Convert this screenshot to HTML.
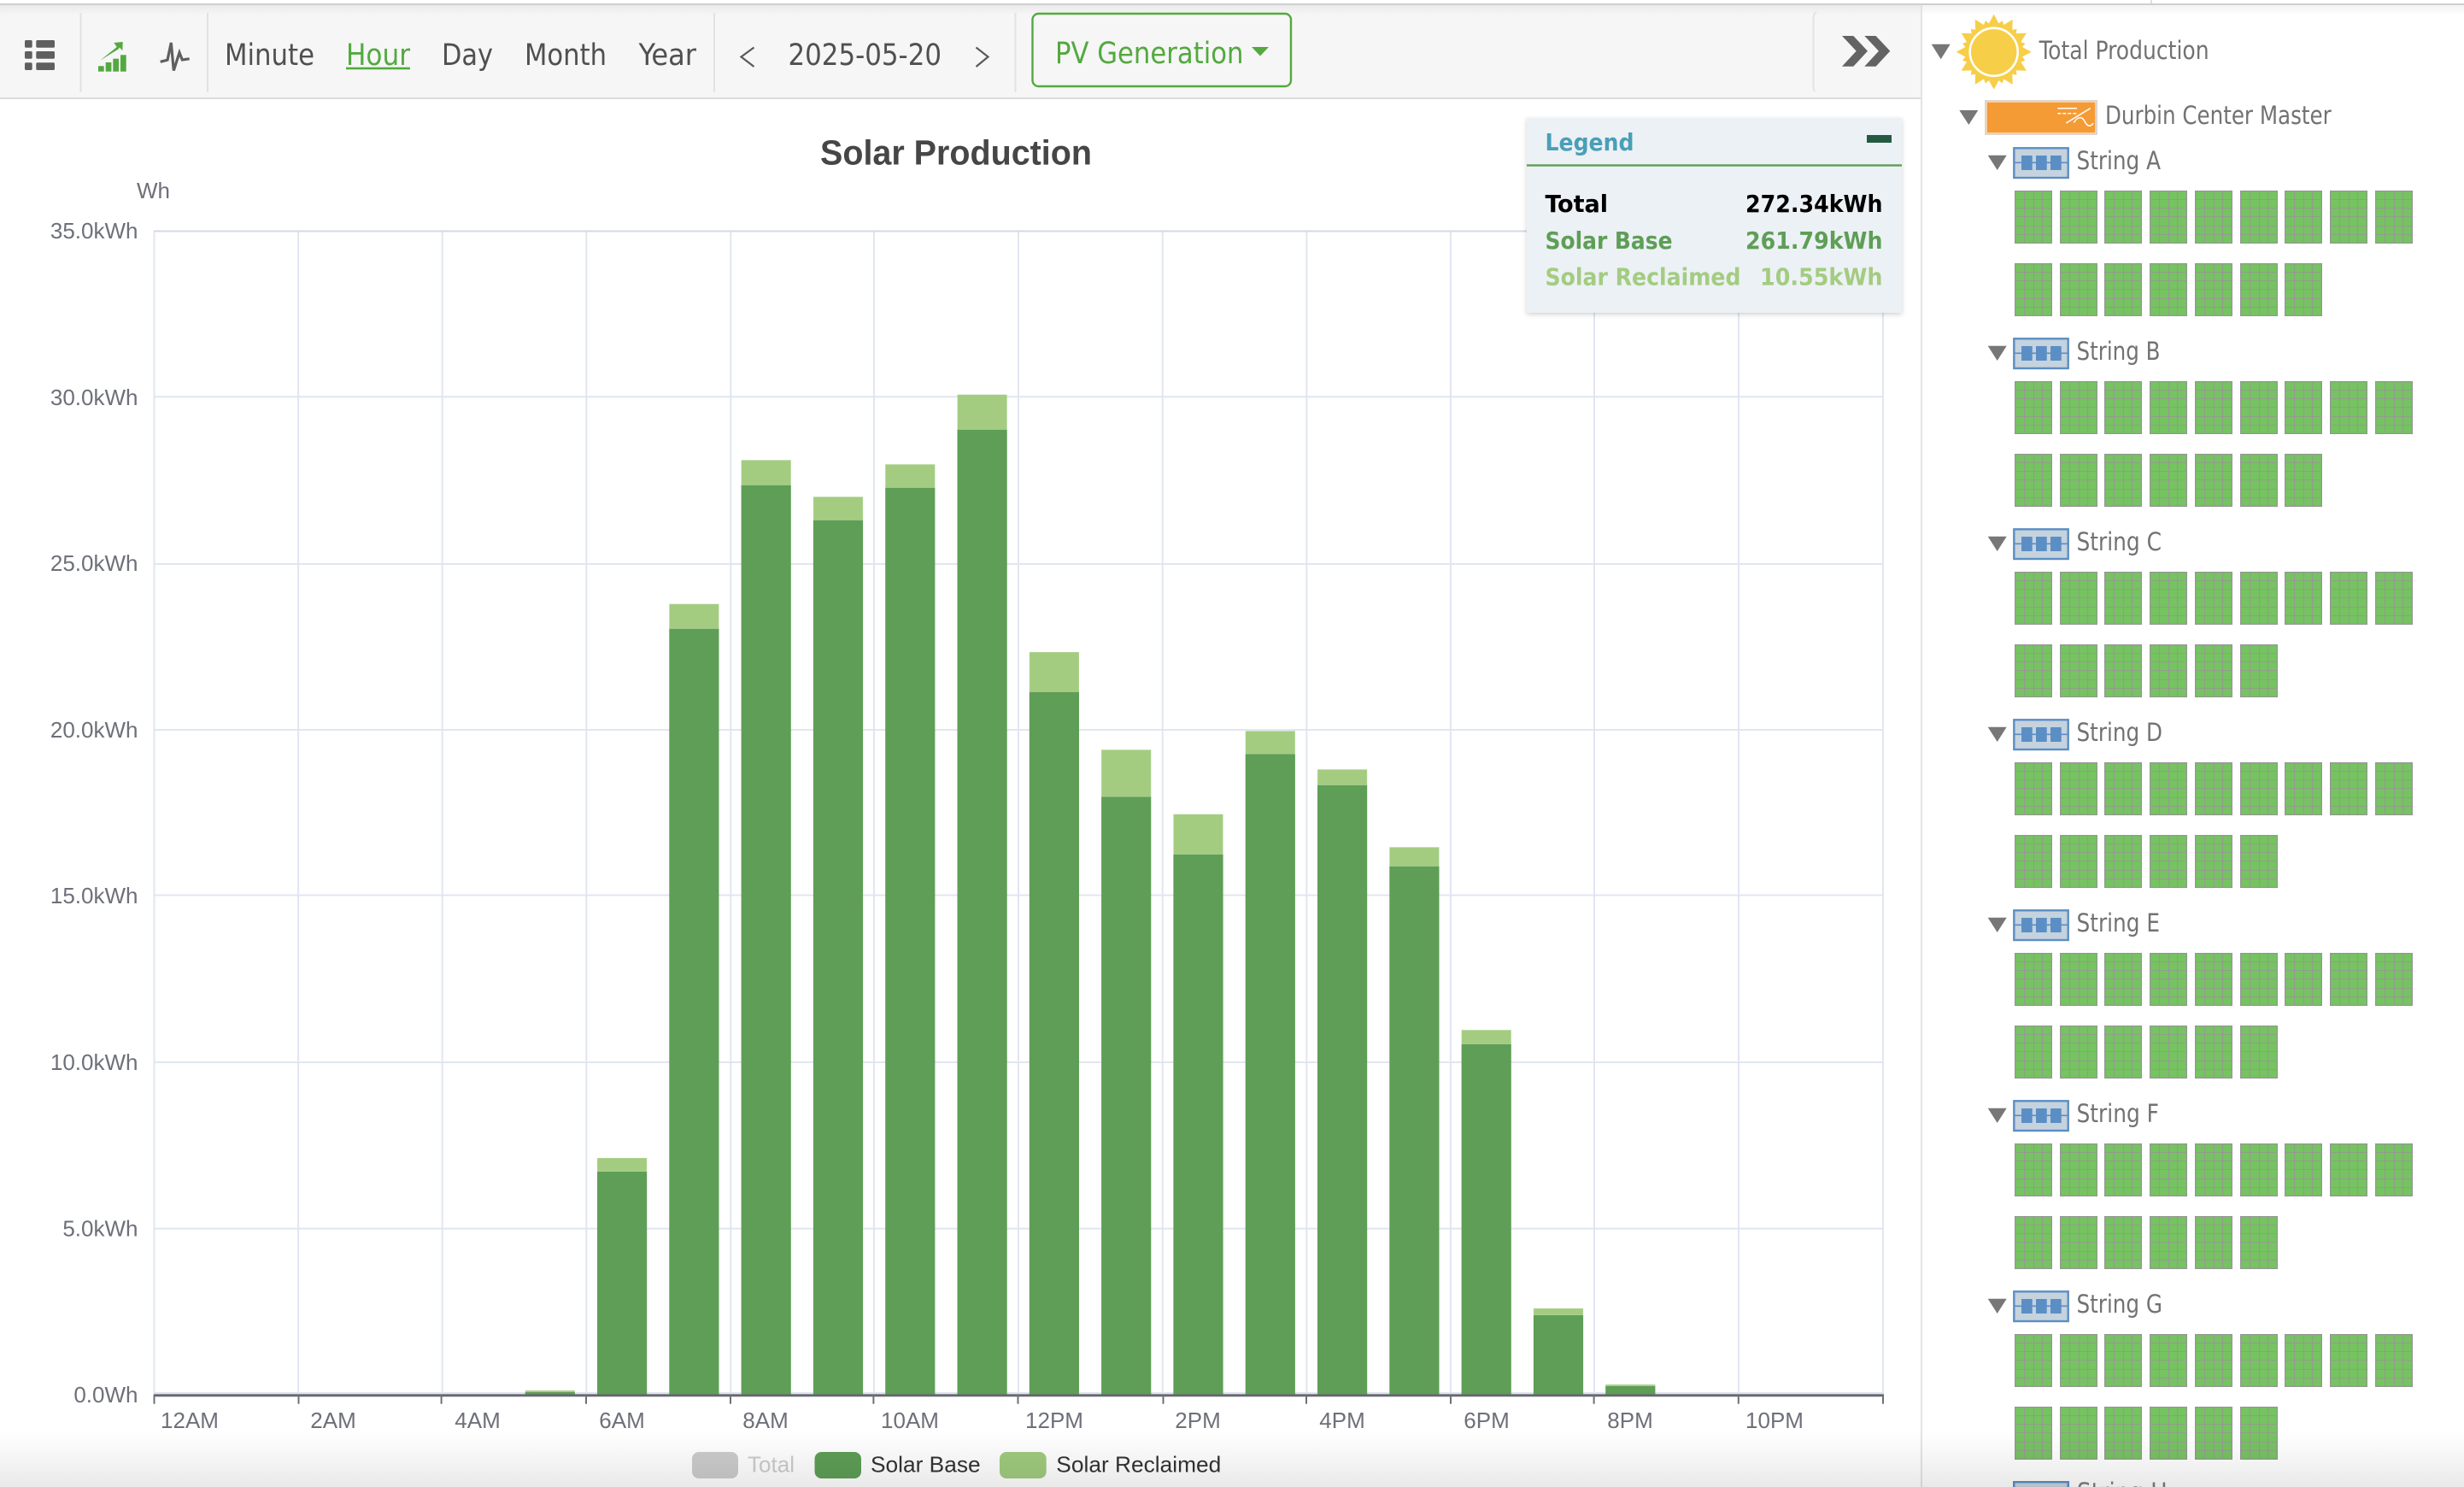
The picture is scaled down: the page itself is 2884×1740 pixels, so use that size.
<!DOCTYPE html>
<html lang="en"><head><meta charset="utf-8"><title>Solar Production</title>
<style>
html,body{margin:0;padding:0;background:#fff;width:2884px;height:1740px;overflow:hidden}
svg{display:block}
.tb{font:35px "DejaVu Sans",sans-serif;font-stretch:condensed;fill:#505050}
.tr{font:29px "DejaVu Sans",sans-serif;font-stretch:condensed;fill:#727272}
.ax{font:26px "Liberation Sans",sans-serif;fill:#6e7079}
.lg{font:bold 28px "DejaVu Sans",sans-serif;font-stretch:condensed}
#sh8{position:absolute;left:2431px;top:1733px;width:120px;height:7px;overflow:hidden}
#sh8 div{position:absolute;left:0;top:-7px;font:29px/40px "DejaVu Sans",sans-serif;font-stretch:condensed;color:#727272;white-space:nowrap}
</style></head><body>
<svg xmlns="http://www.w3.org/2000/svg" width="2884" height="1740" viewBox="0 0 2884 1740">
<defs>
<linearGradient id="fb" x1="0" y1="0" x2="0" y2="1"><stop offset="0" stop-color="#000" stop-opacity="0"/><stop offset="1" stop-color="#000" stop-opacity=".085"/></linearGradient>
<linearGradient id="ft" x1="0" y1="0" x2="0" y2="1"><stop offset="0" stop-color="#000" stop-opacity=".05"/><stop offset="1" stop-color="#000" stop-opacity="0"/></linearGradient>
<filter id="sh" x="-5%" y="-5%" width="110%" height="112%"><feDropShadow dx="0" dy="2" stdDeviation="3" flood-color="#000" flood-opacity=".18"/></filter>
<g id="p"><rect x=".6" y=".6" width="42.8" height="60.8" fill="#76c361" stroke="#959595" stroke-width="1.2"/><path d="M11.5 1V61M22.5 1V61M32.5 1V61M1 10.5H43M1 20.5H43M1 30.5H43M1 41.5H43M1 51.5H43" stroke="#939c8e" stroke-width="1.1" fill="none"/></g>
<g id="row6"><use href="#p" x="2358"/><use href="#p" x="2411"/><use href="#p" x="2463"/><use href="#p" x="2516"/><use href="#p" x="2569"/><use href="#p" x="2622"/></g>
<g id="str">
<path d="M2326.7 181.7H2348.7L2337.7 199Z" fill="#777"/>
<rect x="2357.3" y="173.3" width="63.4" height="34.7" fill="#c5d3de" stroke="#5b8ec4" stroke-width="2.4"/>
<path d="M2358 190.3H2420" stroke="#5b8ec4" stroke-width="1.6"/>
<rect x="2366" y="182" width="12.7" height="17" fill="#5b8ec4"/><rect x="2383" y="182" width="12.7" height="17" fill="#5b8ec4"/><rect x="2400" y="182" width="12.7" height="17" fill="#5b8ec4"/>
<use href="#row6" y="223"/><use href="#p" x="2674" y="223"/><use href="#p" x="2727" y="223"/><use href="#p" x="2780" y="223"/>
<use href="#row6" y="308"/>
</g>
<path id="rl" d="M-7.5 -30L0 -44L7.5 -30Z"/>
<path id="rs" d="M-5 -31L0 -38L5 -31Z"/>
</defs>

<rect width="2884" height="1740" fill="#fff"/>

<!-- toolbar -->
<rect x="0" y="6" width="2249" height="108" fill="#f6f6f6"/>
<rect x="0" y="114" width="2249" height="2" fill="#dcdcdc"/>
<rect x="0" y="4" width="2884" height="2" fill="#cfcfcf"/>
<rect x="2517" y="0" width="2" height="4" fill="#e0e0e0"/>
<rect x="0" y="6" width="2884" height="12" fill="url(#ft)"/>
<g fill="#e2e2e2"><rect x="93.5" y="15" width="2" height="93"/><rect x="242" y="15" width="2" height="93"/><rect x="835" y="15" width="2" height="93"/><rect x="1187.5" y="15" width="2" height="93"/></g>
<path d="M2126 14Q2122.5 16 2122.5 22V100Q2122.5 105 2124 107" fill="none" stroke="#e4e4e4" stroke-width="2"/>
<rect x="2248" y="6" width="2" height="1734" fill="#e3e3e3"/>

<!-- toolbar icons -->
<g fill="#5f5f5f">
<rect x="29" y="47" width="8.7" height="8.7" rx="1.5"/><rect x="42.3" y="47" width="21.7" height="8.7" rx="1.5"/>
<rect x="29" y="60" width="8.7" height="8.7" rx="1.5"/><rect x="42.3" y="60" width="21.7" height="8.7" rx="1.5"/>
<rect x="29" y="73.3" width="8.7" height="8.7" rx="1.5"/><rect x="42.3" y="73.3" width="21.7" height="8.7" rx="1.5"/>
</g>
<g fill="#53a93f">
<rect x="115" y="77.3" width="6.7" height="6.4"/><rect x="123.7" y="73" width="6.7" height="10.7"/><rect x="132.3" y="68.7" width="6.7" height="15"/><rect x="141" y="64.3" width="6.7" height="19.4"/>
<path d="M117.3 70.7L136.7 55L133.3 50L143.7 49L143.3 59.3L140 55.5L138.5 57.5Z"/>
</g>
<path d="M187.7 72.3L196 70.2L200.3 50L203.3 82.5L210 61.5L213.3 70L221.7 68.8" fill="none" stroke="#5f5f5f" stroke-width="3.2" stroke-linejoin="miter"/>

<!-- toolbar text -->
<text class="tb" x="263" y="76" textLength="105" lengthAdjust="spacingAndGlyphs">Minute</text>
<text class="tb" x="405" y="76" textLength="75" lengthAdjust="spacingAndGlyphs" style="fill:#53a93f">Hour</text>
<rect x="405" y="78.7" width="75" height="2.6" fill="#53a93f"/>
<text class="tb" x="517" y="76" textLength="60" lengthAdjust="spacingAndGlyphs">Day</text>
<text class="tb" x="614" y="76" textLength="96" lengthAdjust="spacingAndGlyphs">Month</text>
<text class="tb" x="747.5" y="76" textLength="67.5" lengthAdjust="spacingAndGlyphs">Year</text>
<path d="M882.5 55.5L867.5 66.5L882.5 78" fill="none" stroke="#5a5a5a" stroke-width="2.2"/>
<text class="tb" x="922.5" y="76" textLength="179.5" lengthAdjust="spacingAndGlyphs">2025-05-20</text>
<path d="M1142.5 55.5L1156.5 66.5L1142.5 78" fill="none" stroke="#5a5a5a" stroke-width="2.2"/>
<rect x="1208.5" y="16" width="302.5" height="85" rx="7" fill="none" stroke="#53a93f" stroke-width="2.4"/>
<text class="tb" x="1235" y="74" textLength="220.5" lengthAdjust="spacingAndGlyphs" style="fill:#53a93f">PV Generation</text>
<path d="M1465 55H1485L1475 65.5Z" fill="#53a93f"/>
<path d="M2156 42H2169.3L2186 59.7L2169.3 77.7H2156L2172.7 59.7Z" fill="#636363"/>
<path d="M2182.3 42H2195.6L2212.3 59.7L2195.6 77.7H2182.3L2199 59.7Z" fill="#636363"/>

<!-- chart grid -->
<g stroke="#e0e6f1" stroke-width="2" fill="none">
<path d="M180.5 270V1632M349.1 270V1632M517.7 270V1632M686.3 270V1632M855.3 270V1632M1023 270V1632M1192 270V1632M1360.7 270V1632M1529.3 270V1632M1697.9 270V1632M1866 270V1632M2035 270V1632M2204 270V1632"/>
<path d="M180 464.3H2204M180 660H2204M180 854H2204M180 1047.5H2204M180 1243H2204M180 1437.6H2204M180 1630H2204"/>
</g>
<path d="M180 270.5H2204" stroke="#d4d8e3" stroke-width="2"/>

<!-- bars -->
<g fill="#a3cc80" stroke="#fff" stroke-opacity=".2">
<rect x="614.7" y="1627" width="58.2" height="2"/><rect x="699" y="1355" width="58.2" height="16"/><rect x="783.3" y="706.7" width="58.2" height="29"/><rect x="867.6" y="538.3" width="58.2" height="29.4"/><rect x="951.9" y="581.3" width="58.2" height="27.4"/><rect x="1036.2" y="543.3" width="58.2" height="27.4"/><rect x="1120.5" y="461.7" width="58.2" height="41"/><rect x="1204.8" y="763" width="58.2" height="46.7"/><rect x="1289.1" y="877.3" width="58.2" height="55"/><rect x="1373.4" y="952.7" width="58.2" height="47"/><rect x="1457.7" y="855.3" width="58.2" height="27"/><rect x="1542" y="900.3" width="58.2" height="18.4"/><rect x="1626.3" y="991.3" width="58.2" height="22.4"/><rect x="1710.6" y="1205.2" width="58.2" height="16.6"/><rect x="1794.9" y="1531" width="58.2" height="8"/><rect x="1879.2" y="1620" width="58.2" height="2"/>
</g>
<g fill="#5e9e56">
<rect x="614.7" y="1629" width="58.2" height="3"/><rect x="699" y="1371" width="58.2" height="261"/><rect x="783.3" y="735.7" width="58.2" height="896.3"/><rect x="867.6" y="567.7" width="58.2" height="1064.3"/><rect x="951.9" y="608.7" width="58.2" height="1023.3"/><rect x="1036.2" y="570.7" width="58.2" height="1061.3"/><rect x="1120.5" y="502.7" width="58.2" height="1129.3"/><rect x="1204.8" y="809.7" width="58.2" height="822.3"/><rect x="1289.1" y="932.3" width="58.2" height="699.7"/><rect x="1373.4" y="999.7" width="58.2" height="632.3"/><rect x="1457.7" y="882.3" width="58.2" height="749.7"/><rect x="1542" y="918.7" width="58.2" height="713.3"/><rect x="1626.3" y="1013.7" width="58.2" height="618.3"/><rect x="1710.6" y="1221.8" width="58.2" height="410.2"/><rect x="1794.9" y="1539" width="58.2" height="93"/><rect x="1879.2" y="1622" width="58.2" height="10"/>
</g>

<!-- axis -->
<rect x="180" y="1631.3" width="2025" height="3" fill="#66686f"/>
<path d="M180.5 1632V1642.7M349.5 1632V1642.7M516.6 1632V1642.7M686 1632V1642.7M855 1632V1642.7M1022.4 1632V1642.7M1191.5 1632V1642.7M1361.5 1632V1642.7M1529 1632V1642.7M1698 1632V1642.7M1865.6 1632V1642.7M2034.8 1632V1642.7M2204 1632V1642.7" stroke="#6e7079" stroke-width="2"/>

<!-- axis labels -->
<text class="ax" x="179.5" y="232" text-anchor="middle">Wh</text>
<g class="ax" text-anchor="end">
<text x="161.5" y="279">35.0kWh</text><text x="161.5" y="474">30.0kWh</text><text x="161.5" y="668">25.0kWh</text><text x="161.5" y="863">20.0kWh</text><text x="161.5" y="1057">15.0kWh</text><text x="161.5" y="1252">10.0kWh</text><text x="161.5" y="1446.5">5.0kWh</text><text x="161.5" y="1641">0.0Wh</text>
</g>
<g class="ax" text-anchor="middle">
<text x="222" y="1671">12AM</text><text x="390" y="1671">2AM</text><text x="559" y="1671">4AM</text><text x="728" y="1671">6AM</text><text x="896" y="1671">8AM</text><text x="1065" y="1671">10AM</text><text x="1234" y="1671">12PM</text><text x="1402" y="1671">2PM</text><text x="1571" y="1671">4PM</text><text x="1740" y="1671">6PM</text><text x="1908" y="1671">8PM</text><text x="2077" y="1671">10PM</text>
</g>
<text x="960" y="192.5" textLength="318" lengthAdjust="spacingAndGlyphs" style="font:bold 41px 'Liberation Sans',sans-serif;fill:#464646">Solar Production</text>

<!-- chart legend -->
<rect x="810" y="1699" width="54" height="31" rx="8" fill="#ccc"/>
<text x="875" y="1722.5" textLength="55" lengthAdjust="spacingAndGlyphs" style="font:26px 'Liberation Sans',sans-serif;fill:#ccc">Total</text>
<rect x="953.5" y="1699" width="54.5" height="31" rx="8" fill="#5e9e56"/>
<text x="1019" y="1722.5" textLength="128.6" lengthAdjust="spacingAndGlyphs" style="font:26px 'Liberation Sans',sans-serif;fill:#333">Solar Base</text>
<rect x="1170" y="1699" width="54.7" height="31" rx="8" fill="#a0cb7e"/>
<text x="1236.3" y="1722.5" textLength="193" lengthAdjust="spacingAndGlyphs" style="font:26px 'Liberation Sans',sans-serif;fill:#333">Solar Reclaimed</text>

<!-- legend panel -->
<rect x="1787" y="138" width="439" height="228" fill="#ecf1f5" filter="url(#sh)"/>
<rect x="1787" y="192.3" width="439" height="2.4" fill="#5e9e56"/>
<rect x="2185" y="158" width="29" height="9" fill="#245a42"/>
<text class="lg" x="1808.5" y="176" textLength="104" lengthAdjust="spacingAndGlyphs" style="fill:#4a9fb8">Legend</text>
<text class="lg" x="1808.5" y="248" textLength="73.6" lengthAdjust="spacingAndGlyphs" style="fill:#000">Total</text>
<text class="lg" x="2043" y="248" textLength="160.5" lengthAdjust="spacingAndGlyphs" style="fill:#000">272.34kWh</text>
<text class="lg" x="1808.5" y="291" textLength="149" lengthAdjust="spacingAndGlyphs" style="fill:#5e9e56">Solar Base</text>
<text class="lg" x="2043" y="291" textLength="160.5" lengthAdjust="spacingAndGlyphs" style="fill:#5e9e56">261.79kWh</text>
<text class="lg" x="1808.5" y="333.5" textLength="229" lengthAdjust="spacingAndGlyphs" style="fill:#a3cc80">Solar Reclaimed</text>
<text class="lg" x="2060" y="333.5" textLength="143.5" lengthAdjust="spacingAndGlyphs" style="fill:#a3cc80">10.55kWh</text>

<!-- tree: root -->
<path d="M2260.7 51.7H2282.7L2271.7 69.3Z" fill="#777"/>
<g transform="translate(2333.7 60.8)" fill="#f7ce47">
<use href="#rl"/><use href="#rl" transform="rotate(30)"/><use href="#rl" transform="rotate(60)"/><use href="#rl" transform="rotate(90)"/><use href="#rl" transform="rotate(120)"/><use href="#rl" transform="rotate(150)"/><use href="#rl" transform="rotate(180)"/><use href="#rl" transform="rotate(210)"/><use href="#rl" transform="rotate(240)"/><use href="#rl" transform="rotate(270)"/><use href="#rl" transform="rotate(300)"/><use href="#rl" transform="rotate(330)"/>
<use href="#rs" transform="rotate(15)"/><use href="#rs" transform="rotate(45)"/><use href="#rs" transform="rotate(75)"/><use href="#rs" transform="rotate(105)"/><use href="#rs" transform="rotate(135)"/><use href="#rs" transform="rotate(165)"/><use href="#rs" transform="rotate(195)"/><use href="#rs" transform="rotate(225)"/><use href="#rs" transform="rotate(255)"/><use href="#rs" transform="rotate(285)"/><use href="#rs" transform="rotate(315)"/><use href="#rs" transform="rotate(345)"/>
<circle r="33"/>
<circle r="28" stroke="#fff" stroke-width="2.6"/>
</g>
<text class="tr" x="2386.6" y="69" textLength="199" lengthAdjust="spacingAndGlyphs">Total Production</text>

<!-- tree: inverter -->
<path d="M2293.3 129H2315.3L2304.3 146Z" fill="#777"/>
<rect x="2324" y="118" width="130" height="39" fill="#fff" stroke="#cfc4b8" stroke-width="1.4"/>
<rect x="2325.5" y="119.5" width="127" height="36" fill="#f49b36"/>
<path d="M2408.3 126.7H2431M2408.3 132.7H2431" stroke="#fff" stroke-width="1.5" fill="none"/>
<path d="M2408.3 132.7H2431" stroke="#f49b36" stroke-width="1.6" stroke-dasharray="2 4" stroke-dashoffset="-4" fill="none"/>
<path d="M2418.3 144L2446.7 126.7" stroke="#fff" stroke-width="1.6" fill="none"/>
<path d="M2427.3 143.5C2432 136 2437 136 2440 142C2443 148 2447 149 2450 144" stroke="#fff" stroke-width="1.5" fill="none"/>
<text class="tr" x="2464" y="145" textLength="264.7" lengthAdjust="spacingAndGlyphs">Durbin Center Master</text>

<!-- tree: strings -->
<use href="#str"/>
<use href="#str" y="223"/>
<use href="#str" y="446"/>
<use href="#str" y="669"/>
<use href="#str" y="892"/>
<use href="#str" y="1115"/>
<use href="#str" y="1338"/>
<rect x="2356" y="1733" width="66" height="7" fill="#5b8ec4"/>
<rect x="2358.5" y="1735.4" width="61" height="4.6" fill="#c5d3de"/>
<use href="#p" x="2674" y="308"/><use href="#p" x="2674" y="531"/>
<text class="tr" x="2430.5" y="198" textLength="98.5" lengthAdjust="spacingAndGlyphs">String A</text>
<text class="tr" x="2430.5" y="421" textLength="98" lengthAdjust="spacingAndGlyphs">String B</text>
<text class="tr" x="2430.5" y="644" textLength="99.5" lengthAdjust="spacingAndGlyphs">String C</text>
<text class="tr" x="2430.5" y="867" textLength="100.5" lengthAdjust="spacingAndGlyphs">String D</text>
<text class="tr" x="2430.5" y="1090" textLength="97.5" lengthAdjust="spacingAndGlyphs">String E</text>
<text class="tr" x="2430.5" y="1313" textLength="96.5" lengthAdjust="spacingAndGlyphs">String F</text>
<text class="tr" x="2430.5" y="1536" textLength="100.5" lengthAdjust="spacingAndGlyphs">String G</text>

<!-- bottom fade -->
<rect x="0" y="1675" width="2884" height="65" fill="url(#fb)"/>
</svg>
<div id="sh8"><div>String H</div></div>
</body></html>
